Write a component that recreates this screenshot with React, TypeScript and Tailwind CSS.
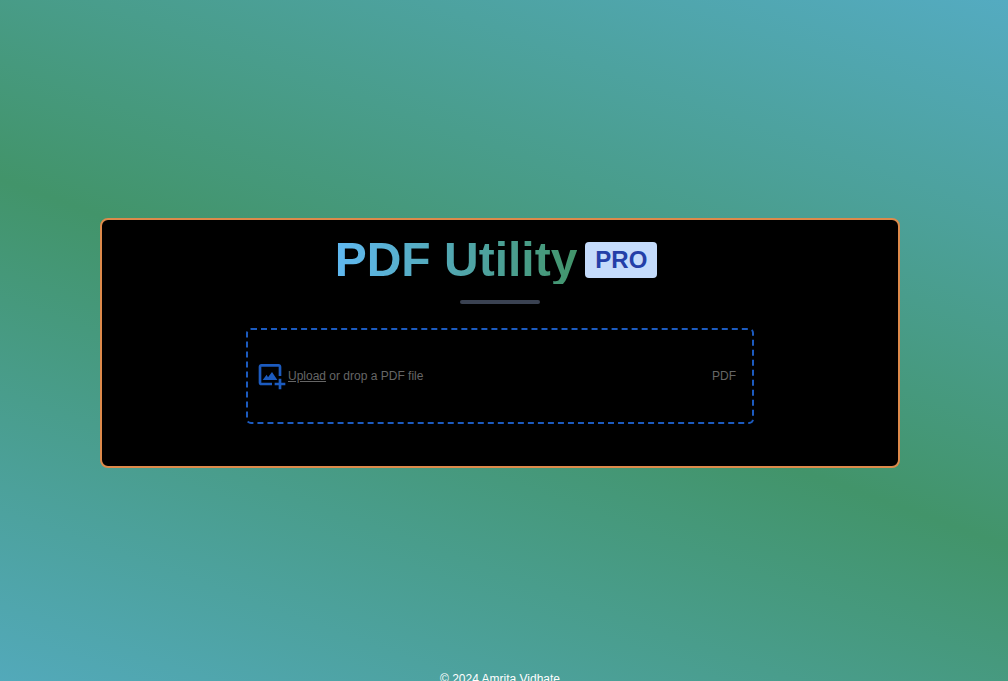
import React from "react";

function AddFileIcon() {
  return (
    <svg width="32" height="32" viewBox="0 0 32 32" fill="#1c5bbf" className="shrink-0" aria-hidden="true">
      <path d="M5.333 6.667H22.667V16H25.333V6.667C25.333 5.196 24.137 4 22.667 4H5.333C3.863 4 2.667 5.196 2.667 6.667V22.667C2.667 24.137 3.863 25.333 5.333 25.333H16V22.667H5.333V6.667Z" />
      <path d="M10.667 14.667L6.667 20H21.333L16 12L12 17.333L10.667 14.667Z" />
      <path d="M25.333 18.667H22.667V22.667H18.667V25.333H22.667V29.333H25.333V25.333H29.333V22.667H25.333V18.667Z" />
    </svg>
  );
}

function DropZone() {
  return (
    <label
      htmlFor="pdf-file"
      className="flex h-24 w-full max-w-[508px] cursor-pointer items-center rounded-[5px] border-2 border-dashed border-[#1c5bbf] pr-4 pl-2 text-xs text-[#666666]"
    >
      <input id="pdf-file" type="file" accept="application/pdf" className="sr-only" />
      <AddFileIcon />
      <span className="flex grow items-center justify-between">
        <span>
          <span className="underline">Upload</span> or drop a PDF file
        </span>
        <span>PDF</span>
      </span>
    </label>
  );
}

export default function App() {
  return (
    <div className="flex min-h-[calc(100vh+44px)] flex-col bg-[linear-gradient(20deg,#54abc1_0%,#42946a_50%,#54abc1_100%)] pr-2 font-['Liberation_Sans',Arial,sans-serif]">
      <main className="flex grow items-center justify-center pt-4">
        <section className="flex w-4/5 flex-col items-center rounded-lg border-2 border-[#dd8a4b] bg-black px-4 pt-4 pb-[42px]">
          <h1 className="flex items-center text-5xl leading-none font-bold">
            <span className="bg-[linear-gradient(to_right,#60b9f2,#42946a)] bg-clip-text text-transparent">PDF Utility</span>
            <span className="mx-2 rounded bg-[#c4dbfb] px-2.5 py-0.5 text-2xl text-[#233fa8]">PRO</span>
          </h1>
          <hr className="mt-4 mb-6 h-1 w-20 rounded-sm border-0 bg-[#3a4252]" />
          <DropZone />
        </section>
      </main>
      <footer className="h-14 text-center text-xs leading-5 font-medium text-white">© 2024 Amrita Vidhate</footer>
    </div>
  );
}
